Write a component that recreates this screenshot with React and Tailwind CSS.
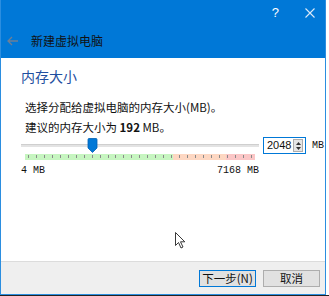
import React from 'react';

const cjk = { fontFamily: '"Noto Sans CJK SC", "Liberation Sans", sans-serif' };

function Ticks() {
  const ticks = Array.from({ length: 29 });
  return (
    <div className="absolute inset-0 flex justify-between px-[3px]">
      {ticks.map((_, i) => (
        <div key={i} className="w-px h-[3px] mt-[1px] bg-[#8a8a8a]" />
      ))}
    </div>
  );
}

export default function App() {
  return (
    <div className="w-[329px] h-[296px] bg-white overflow-hidden" style={cjk}>
      <div className="w-[326px] h-[295px] flex flex-col border-l border-r border-b border-[#2b8ee0] bg-white">
        {/* Title bar */}
        <div className="h-[58px] bg-[#0078d7] flex flex-col">
          <div className="h-[25px] flex items-center justify-end text-white">
            <span className="text-[13px] mr-[26px]" style={{ fontFamily: '"Liberation Sans", sans-serif' }}>?</span>
            <svg width="10" height="10" viewBox="0 0 10 10" className="mr-[10px]">
              <path d="M0.5 0.5L9.5 9.5M9.5 0.5L0.5 9.5" stroke="#dbeaf8" strokeWidth="1.1" />
            </svg>
          </div>
          <div className="flex items-center h-[34px] pl-[6px] -mt-[1px]">
            <svg width="12" height="10" viewBox="0 0 12 10">
              <path d="M5 1L1 5L5 9M1 5H11" stroke="#6e7f95" strokeWidth="1.3" fill="none" />
            </svg>
            <span className="ml-[12px] text-[12px] text-[#111]">新建虚拟电脑</span>
          </div>
        </div>

        {/* Content */}
        <div className="flex-1 flex flex-col pl-[20px] pt-[9px] relative">
          <div className="text-[14px] text-[#1f4fa0] leading-[18px]">内存大小</div>
          <div className="text-[11.5px] text-[#111] mt-[15px] pl-[4px] leading-[14px]">选择分配给虚拟电脑的内存大小(MB)。</div>
          <div className="text-[11.5px] text-[#111] mt-[6px] pl-[4px] leading-[14px]">
            建议的内存大小为 <span className="font-bold">192</span> MB。
          </div>

          <div className="flex items-start mt-[4px]">
            <div className="w-[238px] flex flex-col">
              <div className="relative h-[14px]">
                <div className="absolute left-0 right-0 top-[6px] h-[3px] bg-[#e3e3e3] border-t border-[#cfcfcf]" />
                <svg className="absolute left-[66px] top-0" width="11" height="15" viewBox="0 0 11 15">
                  <path d="M1 1.5Q1 0.5 2 0.5H9Q10 0.5 10 1.5V10L5.5 14.5L1 10Z" fill="#0078d7" stroke="#005fb3" strokeWidth="0.8" />
                </svg>
              </div>
              <div className="relative h-[6px] mx-[4px] mt-[2px] flex">
                <div className="w-[148px] bg-[#c6f5c0]" />
                <div className="w-[53px] bg-[#fdd7c2]" />
                <div className="flex-1 bg-[#fbc6c6]" />
                <Ticks />
              </div>
              <div
                className="flex justify-between mt-[5px] text-[10px] text-[#111] leading-[12px]"
                style={{ fontFamily: '"Liberation Mono", monospace' }}
              >
                <span>4 MB</span>
                <span>7168 MB</span>
              </div>
            </div>

            <div className="ml-[4px] mt-[-1px] w-[43px] h-[17px] border border-[#0078d7] bg-white flex items-center">
              <span className="flex-1 pl-[3px] text-[11px] text-[#111]" style={{ fontFamily: '"Liberation Sans", sans-serif' }}>2048</span>
              <div className="w-[10px] h-[13px] mr-[2px] border border-[#adadad] bg-[#e5e5e5] flex flex-col items-center justify-center gap-[2px]">
                <svg width="5" height="3" viewBox="0 0 5 3"><path d="M0 3L2.5 0L5 3Z" fill="#333" /></svg>
                <svg width="5" height="3" viewBox="0 0 5 3"><path d="M0 0L2.5 3L5 0Z" fill="#333" /></svg>
              </div>
            </div>
            <span className="ml-[6px] mt-[1px] text-[10px] text-[#111] leading-[14px]" style={{ fontFamily: '"Liberation Mono", monospace' }}>MB</span>
          </div>

          {/* mouse cursor */}
          <svg className="absolute left-[174px] top-[174px]" width="11" height="17" viewBox="0 0 11 17">
            <path d="M0.5 0.5V13.5L3.5 10.5L6 16L8 15L5.5 9.8H9.8Z" fill="#fff" stroke="#222" strokeWidth="0.9" />
          </svg>
        </div>

        {/* Footer */}
        <div className="h-[33px] bg-[#efefef] border-t border-[#dcdcdc] flex items-center justify-end gap-[7px] pr-[5px]">
          <button className="w-[57px] h-[17px] border border-[#0078d7] bg-[#e1e1e1] text-[11.5px] text-[#111] leading-[15px]">下一步(N)</button>
          <button className="w-[57px] h-[17px] border border-[#adadad] bg-[#e1e1e1] text-[11.5px] text-[#111] leading-[15px]">取消</button>
        </div>
      </div>
      <div className="h-px bg-[#222]" />
    </div>
  );
}
